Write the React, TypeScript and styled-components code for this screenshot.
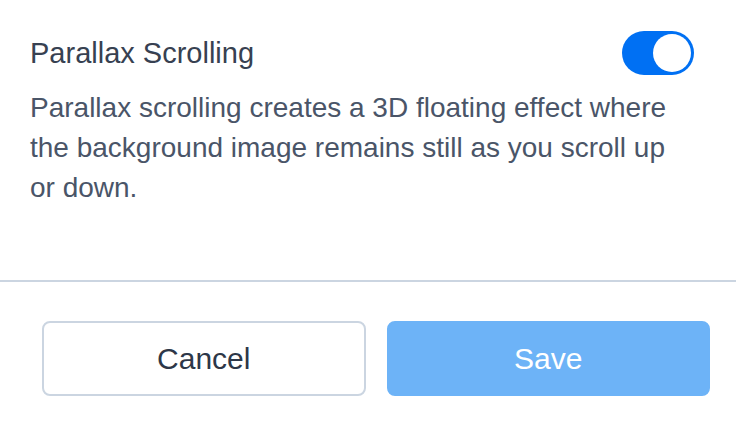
import styled, { createGlobalStyle } from "styled-components";

const GlobalStyle = createGlobalStyle`
  body {
    margin: 0;
    background: #ffffff;
    font-family: "Liberation Sans", Arial, sans-serif;
  }
`;

const Panel = styled.div`
  width: 736px;
  height: 424px;
  display: flex;
  flex-direction: column;
  background: #ffffff;
`;

const Body = styled.section`
  padding: 31px 42px 0 30px;
  height: 282px;
  box-sizing: border-box;
  border-bottom: 2px solid #cbd5e1;
`;

const HeaderRow = styled.div`
  display: flex;
  align-items: center;
  justify-content: space-between;
  height: 44px;
`;

const Title = styled.h2`
  margin: 0;
  font-size: 29px;
  font-weight: 400;
  color: #374151;
`;

const Toggle = styled.button<{ $on: boolean }>`
  width: 72px;
  height: 44px;
  padding: 3px;
  border: none;
  border-radius: 22px;
  background: ${(p) => (p.$on ? "#0070f3" : "#cbd5e1")};
  display: flex;
  justify-content: ${(p) => (p.$on ? "flex-end" : "flex-start")};
  cursor: pointer;
`;

const Knob = styled.span`
  width: 38px;
  height: 38px;
  border-radius: 50%;
  background: #ffffff;
`;

const Description = styled.p`
  margin: 13px 0 0;
  width: 650px;
  font-size: 28px;
  line-height: 40px;
  color: #4a5568;
`;

const Footer = styled.footer`
  display: flex;
  gap: 21px;
  padding: 39px 26px 0 42px;
`;

const Button = styled.button<{ $primary?: boolean }>`
  flex: 1;
  height: 75px;
  border-radius: 8px;
  font-family: "Liberation Sans", Arial, sans-serif;
  font-size: 30px;
  box-sizing: border-box;
  border: 2px solid ${(p) => (p.$primary ? "#6db3f7" : "#cbd5e1")};
  background: ${(p) => (p.$primary ? "#6db3f7" : "#ffffff")};
  color: ${(p) => (p.$primary ? "#ffffff" : "#2d3748")};
  cursor: pointer;
`;

export default function App() {
  return (
    <>
      <GlobalStyle />
      <Panel>
        <Body>
          <HeaderRow>
            <Title>Parallax Scrolling</Title>
            <Toggle $on aria-label="Parallax Scrolling">
              <Knob />
            </Toggle>
          </HeaderRow>
          <Description>
            Parallax scrolling creates a 3D floating effect where the background
            image remains still as you scroll up or down.
          </Description>
        </Body>
        <Footer>
          <Button>Cancel</Button>
          <Button $primary>Save</Button>
        </Footer>
      </Panel>
    </>
  );
}
